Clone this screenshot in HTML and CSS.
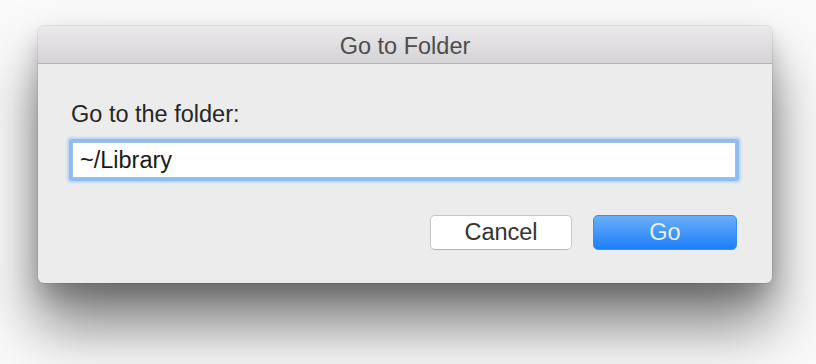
FILE: index.html
```html
<!DOCTYPE html>
<html lang="en">
<head>
    <meta charset="UTF-8">
    <meta name="viewport" content="width=device-width, initial-scale=1.0">
    <title>Go to Folder</title>
    <link rel="stylesheet" href="styles.css">
</head>
<body>
    <div class="stage">
        <div class="window">
            <div class="title-bar">Go to Folder</div>
            <div class="sheet">
                <label class="field-label" for="folder">Go to the folder:</label>
                <input type="text" id="folder" class="input-field" value="~/Library">
                <div class="actions">
                    <button class="cancel-button" type="button">Cancel</button>
                    <button class="go-button" type="button">Go</button>
                </div>
            </div>
        </div>
    </div>
</body>
</html>
```

FILE: styles.css
```css
* {
    margin: 0;
    padding: 0;
    box-sizing: border-box;
}

body {
    font-family: "Liberation Sans", Arial, Helvetica, sans-serif;
    background-color: #fafafa;
    width: 816px;
    height: 364px;
    overflow: hidden;
}

.stage {
    padding: 26px 44px 0 38px;
}

.window {
    width: 734px;
    height: 257px;
    background-color: #ececec;
    border-radius: 6px;
    box-shadow: 0 0 0 1px rgba(0, 0, 0, 0.07),
                0 12px 24px rgba(0, 0, 0, 0.2),
                0 42px 60px rgba(0, 0, 0, 0.5);
    overflow: hidden;
}

.title-bar {
    height: 38px;
    padding-top: 3px;
    line-height: 34px;
    text-align: center;
    font-size: 23.5px;
    color: #4d4d4d;
    background: linear-gradient(to bottom, #ebe9ec, #d5d3d6);
    border-bottom: 1px solid #b3b3b3;
}

.sheet {
    padding: 37px 35px 0 34px;
}

.field-label {
    display: block;
    font-size: 23.5px;
    line-height: 26px;
    color: #262626;
    margin-left: -1px;
    margin-bottom: 15px;
}

.input-field {
    display: block;
    width: 664px;
    height: 36px;
    border: 1px solid #9dc0ec;
    border-radius: 1px;
    outline: none;
    padding: 0 7px;
    font-family: inherit;
    font-size: 23.5px;
    color: #1a1a1a;
    background-color: white;
    box-shadow: 0 0 0 3px #8dbcf3, 0 0 2px 5px rgba(141, 188, 243, 0.45);
}

.actions {
    display: flex;
    justify-content: flex-end;
    gap: 21px;
    margin-top: 37px;
}

.cancel-button, .go-button {
    height: 35px;
    border-radius: 5px;
    font-family: inherit;
    font-size: 23.5px;
    cursor: pointer;
}

.cancel-button {
    width: 142px;
    color: #333;
    background-color: white;
    border: 1px solid #c6c6c6;
    border-bottom-color: #b4b4b4;
}

.go-button {
    width: 144px;
    color: #e8f1ff;
    border: 1px solid #3b8df1;
    background: linear-gradient(to bottom, #6aaefb, #1d7ff7);
}
```
